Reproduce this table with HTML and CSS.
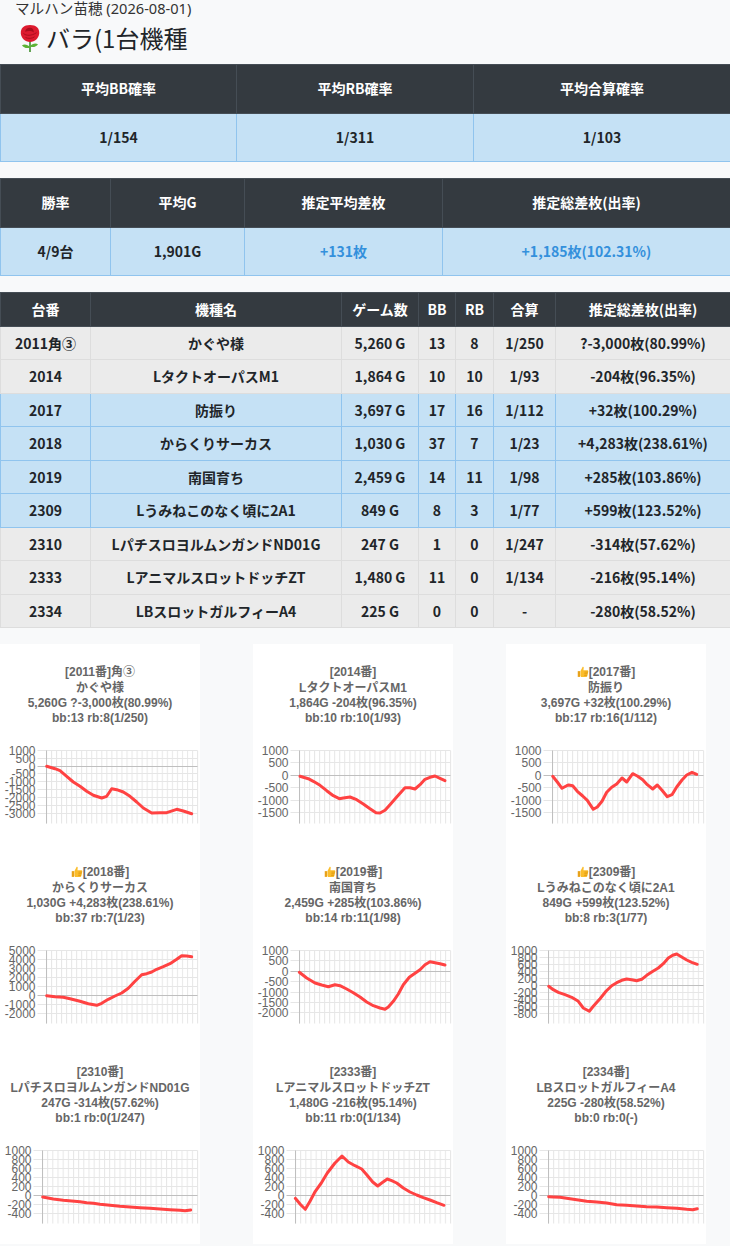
FILE: index.html
```html
<!DOCTYPE html>
<html lang="ja">
<head>
<meta charset="utf-8">
<title>バラ(1台機種</title>
<link rel="stylesheet" href="styles.css">
</head>
<body>
<p class="shop">マルハン苗穂 (2026-08-01)</p>
<h1 class="title"><svg class="rose" viewBox="0 0 24 28"><path class="stem" d="M11.2 16h1.6v12h-1.6z"/><path class="leaf" d="M12 23.5c-2-3-5.5-3.5-8-2.3 1.6 2.6 5 3.6 8 2.3zM12 22.5c2-3 5.5-3.5 8-2.3-1.6 2.6-5 3.6-8 2.3z"/><path class="bloom" d="M12 1C6 1 2.3 4.3 2.8 9.5 3.3 14 7 18 12 18s8.7-4 9.2-8.5C21.7 4.3 18 1 12 1z"/><path class="bloom-d" d="M12 3.8c-3 0-4.8 1.7-4.8 4 2.4-1.2 6-1.2 8.6.6C15.8 5.6 14.5 3.8 12 3.8z"/><path class="bloom-l" d="M5.5 9.5c2.5 2.4 8 2.6 13-.8M7.5 13.5c2.5 1.3 6.5 1.2 9-.6"/></svg><span>バラ(1台機種</span></h1>

<table class="tbl big">
<colgroup><col class="c236"><col class="c237"><col class="c257"></colgroup>
<thead><tr><th>平均BB確率</th><th>平均RB確率</th><th>平均合算確率</th></tr></thead>
<tbody><tr class="blue"><td>1/154</td><td>1/311</td><td>1/103</td></tr></tbody>
</table>

<table class="tbl big">
<colgroup><col class="c110"><col class="c134"><col class="c198"><col class="c288"></colgroup>
<thead><tr><th>勝率</th><th>平均G</th><th>推定平均差枚</th><th>推定総差枚(出率)</th></tr></thead>
<tbody><tr class="blue"><td>4/9台</td><td>1,901G</td><td class="plus">+131枚</td><td class="plus">+1,185枚(102.31%)</td></tr></tbody>
</table>

<table class="tbl list">
<colgroup><col class="c90"><col class="c251"><col class="c77"><col class="c37"><col class="c38"><col class="c62"><col class="c175"></colgroup>
<thead><tr><th>台番</th><th>機種名</th><th>ゲーム数</th><th>BB</th><th>RB</th><th>合算</th><th>推定総差枚(出率)</th></tr></thead>
<tbody>
<tr class="gray"><td>2011角③</td><td>かぐや様</td><td>5,260 G</td><td>13</td><td>8</td><td>1/250</td><td>?-3,000枚(80.99%)</td></tr>
<tr class="gray"><td>2014</td><td>LタクトオーパスM1</td><td>1,864 G</td><td>10</td><td>10</td><td>1/93</td><td>-204枚(96.35%)</td></tr>
<tr class="blue"><td>2017</td><td>防振り</td><td>3,697 G</td><td>17</td><td>16</td><td>1/112</td><td>+32枚(100.29%)</td></tr>
<tr class="blue"><td>2018</td><td>からくりサーカス</td><td>1,030 G</td><td>37</td><td>7</td><td>1/23</td><td>+4,283枚(238.61%)</td></tr>
<tr class="blue"><td>2019</td><td>南国育ち</td><td>2,459 G</td><td>14</td><td>11</td><td>1/98</td><td>+285枚(103.86%)</td></tr>
<tr class="blue"><td>2309</td><td>Lうみねこのなく頃に2A1</td><td>849 G</td><td>8</td><td>3</td><td>1/77</td><td>+599枚(123.52%)</td></tr>
<tr class="gray"><td>2310</td><td>LパチスロヨルムンガンドND01G</td><td>247 G</td><td>1</td><td>0</td><td>1/247</td><td>-314枚(57.62%)</td></tr>
<tr class="gray"><td>2333</td><td>LアニマルスロットドッチZT</td><td>1,480 G</td><td>11</td><td>0</td><td>1/134</td><td>-216枚(95.14%)</td></tr>
<tr class="gray"><td>2334</td><td>LBスロットガルフィーA4</td><td>225 G</td><td>0</td><td>0</td><td>-</td><td>-280枚(58.52%)</td></tr>
</tbody>
</table>

<div class="charts">

<div class="card">
<p class="ctitle">[2011番]角③<br>かぐや様<br>5,260G ?-3,000枚(80.99%)<br>bb:13 rb:8(1/250)</p>
<svg class="chart" viewBox="0 0 200 100">
<defs><pattern id="p1" patternUnits="userSpaceOnUse" x="46" y="0" width="5.033" height="100"><rect class="gv" width="1" height="100"/></pattern></defs>
<rect x="46" y="6.5" width="153" height="73" fill="url(#p1)"/>
<path class="gh" d="M37.5 6.5H197.5M37.5 14.5H197.5M37.5 29.5H197.5M37.5 37.5H197.5M37.5 45.5H197.5M37.5 53.5H197.5M37.5 61.5H197.5M37.5 69.5H197.5"/>
<path class="gz" d="M37.5 22.5H197.5M46.5 6.5V79.5"/>
<text class="yl" x="35.5" y="10.8">1000</text><text class="yl" x="35.5" y="18.8">500</text><text class="yl" x="35.5" y="26.8">0</text><text class="yl" x="35.5" y="33.8">-500</text><text class="yl" x="35.5" y="41.8">-1000</text><text class="yl" x="35.5" y="49.8">-1500</text><text class="yl" x="35.5" y="57.8">-2000</text><text class="yl" x="35.5" y="65.8">-2500</text><text class="yl" x="35.5" y="73.8">-3000</text>
<polyline class="ln" points="46.7,22.3 55,24.7 60,26.7 66.7,32.3 73.3,38 80,42.3 86.7,47.3 93.3,51.3 101.7,54 106.7,52.3 111.7,44.7 116.7,45.7 123.3,48 130,52.3 136.7,58 143.3,64 151.7,69 160,68.7 166.7,68.7 176.7,65.3 183.3,67 191.7,69.7"/>
</svg>
</div>

<div class="card">
<p class="ctitle">[2014番]<br>LタクトオーパスM1<br>1,864G -204枚(96.35%)<br>bb:10 rb:10(1/93)</p>
<svg class="chart" viewBox="0 0 200 100">
<defs><pattern id="p2" patternUnits="userSpaceOnUse" x="46" y="0" width="5.033" height="100"><rect class="gv" width="1" height="100"/></pattern></defs>
<rect x="46" y="6.5" width="153" height="73" fill="url(#p2)"/>
<path class="gh" d="M37.5 6.5H197.5M37.5 18.5H197.5M37.5 43.5H197.5M37.5 56.5H197.5M37.5 68.5H197.5"/>
<path class="gz" d="M37.5 31.5H197.5M46.5 6.5V79.5"/>
<text class="yl" x="35.5" y="10.8">1000</text><text class="yl" x="35.5" y="22.8">500</text><text class="yl" x="35.5" y="35.8">0</text><text class="yl" x="35.5" y="47.8">-500</text><text class="yl" x="35.5" y="60.8">-1000</text><text class="yl" x="35.5" y="72.8">-1500</text>
<polyline class="ln" points="47,32.3 55.3,34.7 60.3,37.3 67,41.3 73.7,46.7 80.3,51.7 86.3,54.7 90.3,54 97,53 103.7,55.7 110.3,60 117,64.7 123,68.7 127,69 132,66.3 137,60.7 143.7,53 152,43.7 157,43.7 162,45 167,40.7 172,35.3 177,33.3 182,32 187,34.3 192,36.7"/>
</svg>
</div>

<div class="card">
<p class="ctitle"><svg class="thumb" viewBox="0 0 16 16"><path class="th-c" d="M1 7.5h3v7.7H1z"/><path class="th-h" d="M4.5 7.5L7.2 2.3C7.6 1.4 9 1.6 9 2.7L8.6 6.3H13.6C14.6 6.3 15.3 7.2 15 8.2L13.7 14.2C13.5 14.8 13 15.2 12.4 15.2H5.6C5 15.2 4.5 14.7 4.5 14.1Z"/><path class="th-l" d="M10 8.8h4.6M9.8 11h4.2M9.6 13.2h3.8"/></svg>[2017番]<br>防振り<br>3,697G +32枚(100.29%)<br>bb:17 rb:16(1/112)</p>
<svg class="chart" viewBox="0 0 200 100">
<defs><pattern id="p3" patternUnits="userSpaceOnUse" x="46" y="0" width="5.033" height="100"><rect class="gv" width="1" height="100"/></pattern></defs>
<rect x="46" y="6.5" width="153" height="73" fill="url(#p3)"/>
<path class="gh" d="M37.5 6.5H197.5M37.5 18.5H197.5M37.5 43.5H197.5M37.5 56.5H197.5M37.5 68.5H197.5"/>
<path class="gz" d="M37.5 31.5H197.5M46.5 6.5V79.5"/>
<text class="yl" x="35.5" y="10.8">1000</text><text class="yl" x="35.5" y="22.8">500</text><text class="yl" x="35.5" y="35.8">0</text><text class="yl" x="35.5" y="47.8">-500</text><text class="yl" x="35.5" y="60.8">-1000</text><text class="yl" x="35.5" y="72.8">-1500</text>
<polyline class="ln" points="46.7,32.3 51.3,38 56,44.3 60.7,41.7 62.7,41 66.7,41.7 71.3,47.3 76.7,52 81.3,56.3 87.3,65.3 91.3,63 96,57.3 100.7,48.3 105.7,43.3 110.7,40 116,34 120.7,38 126.7,29.7 131.3,32 136.7,35.7 141.3,40.7 146.7,45 151.3,41 156,46.3 161.3,52.7 166,50.7 170.7,43 176,36 180.7,31 186,28.3 190.7,30.3"/>
</svg>
</div>

<div class="card">
<p class="ctitle"><svg class="thumb" viewBox="0 0 16 16"><path class="th-c" d="M1 7.5h3v7.7H1z"/><path class="th-h" d="M4.5 7.5L7.2 2.3C7.6 1.4 9 1.6 9 2.7L8.6 6.3H13.6C14.6 6.3 15.3 7.2 15 8.2L13.7 14.2C13.5 14.8 13 15.2 12.4 15.2H5.6C5 15.2 4.5 14.7 4.5 14.1Z"/><path class="th-l" d="M10 8.8h4.6M9.8 11h4.2M9.6 13.2h3.8"/></svg>[2018番]<br>からくりサーカス<br>1,030G +4,283枚(238.61%)<br>bb:37 rb:7(1/23)</p>
<svg class="chart" viewBox="0 0 200 100">
<defs><pattern id="p4" patternUnits="userSpaceOnUse" x="46" y="0" width="5.033" height="100"><rect class="gv" width="1" height="100"/></pattern></defs>
<rect x="46" y="6.5" width="153" height="73" fill="url(#p4)"/>
<path class="gh" d="M37.5 6.5H197.5M37.5 15.5H197.5M37.5 24.5H197.5M37.5 33.5H197.5M37.5 42.5H197.5M37.5 60.5H197.5M37.5 69.5H197.5"/>
<path class="gz" d="M37.5 51.5H197.5M46.5 6.5V79.5"/>
<text class="yl" x="35.5" y="10.8">5000</text><text class="yl" x="35.5" y="19.8">4000</text><text class="yl" x="35.5" y="28.8">3000</text><text class="yl" x="35.5" y="37.8">2000</text><text class="yl" x="35.5" y="46.8">1000</text><text class="yl" x="35.5" y="55.8">0</text><text class="yl" x="35.5" y="64.8">-1000</text><text class="yl" x="35.5" y="73.8">-2000</text>
<polyline class="ln" points="46.7,51.7 55,52.7 63.3,53.3 70,54.7 80,57.3 88.3,59.7 96.7,61.3 101.7,59.3 108.3,55.3 115,52 121.7,49 128.3,44.3 135,37.3 141.7,30.7 146.7,29.7 151.7,28 156.7,25.3 163.3,22.7 170,19.7 176.7,15.3 181.7,11.7 186.7,12 191.7,12.7"/>
</svg>
</div>

<div class="card">
<p class="ctitle"><svg class="thumb" viewBox="0 0 16 16"><path class="th-c" d="M1 7.5h3v7.7H1z"/><path class="th-h" d="M4.5 7.5L7.2 2.3C7.6 1.4 9 1.6 9 2.7L8.6 6.3H13.6C14.6 6.3 15.3 7.2 15 8.2L13.7 14.2C13.5 14.8 13 15.2 12.4 15.2H5.6C5 15.2 4.5 14.7 4.5 14.1Z"/><path class="th-l" d="M10 8.8h4.6M9.8 11h4.2M9.6 13.2h3.8"/></svg>[2019番]<br>南国育ち<br>2,459G +285枚(103.86%)<br>bb:14 rb:11(1/98)</p>
<svg class="chart" viewBox="0 0 200 100">
<defs><pattern id="p5" patternUnits="userSpaceOnUse" x="46" y="0" width="5.033" height="100"><rect class="gv" width="1" height="100"/></pattern></defs>
<rect x="46" y="6.5" width="153" height="73" fill="url(#p5)"/>
<path class="gh" d="M37.5 6.5H197.5M37.5 16.5H197.5M37.5 37.5H197.5M37.5 48.5H197.5M37.5 58.5H197.5M37.5 68.5H197.5"/>
<path class="gz" d="M37.5 27.5H197.5M46.5 6.5V79.5"/>
<text class="yl" x="35.5" y="10.8">1000</text><text class="yl" x="35.5" y="20.8">500</text><text class="yl" x="35.5" y="31.8">0</text><text class="yl" x="35.5" y="41.8">-500</text><text class="yl" x="35.5" y="52.8">-1000</text><text class="yl" x="35.5" y="62.8">-1500</text><text class="yl" x="35.5" y="72.8">-2000</text>
<polyline class="ln" points="46.3,28.3 53.7,34 62,39 68.7,41 75.3,42.7 82,40.7 87,41.7 93.7,45 100.3,48.7 107,53 113.7,58 120.3,61.7 127,64 132,65.3 135.3,63 140.3,57.3 145.3,50 150.3,40.7 156.3,33.3 162,29.3 167,25.7 172,20.7 177,17.7 182,18.7 187,19.7 192,21"/>
</svg>
</div>

<div class="card">
<p class="ctitle"><svg class="thumb" viewBox="0 0 16 16"><path class="th-c" d="M1 7.5h3v7.7H1z"/><path class="th-h" d="M4.5 7.5L7.2 2.3C7.6 1.4 9 1.6 9 2.7L8.6 6.3H13.6C14.6 6.3 15.3 7.2 15 8.2L13.7 14.2C13.5 14.8 13 15.2 12.4 15.2H5.6C5 15.2 4.5 14.7 4.5 14.1Z"/><path class="th-l" d="M10 8.8h4.6M9.8 11h4.2M9.6 13.2h3.8"/></svg>[2309番]<br>Lうみねこのなく頃に2A1<br>849G +599枚(123.52%)<br>bb:8 rb:3(1/77)</p>
<svg class="chart" viewBox="0 0 200 100">
<defs><pattern id="p6" patternUnits="userSpaceOnUse" x="42" y="0" width="5.167" height="100"><rect class="gv" width="1" height="100"/></pattern></defs>
<rect x="42" y="6.5" width="157" height="73" fill="url(#p6)"/>
<path class="gh" d="M33.5 6.5H197.5M33.5 13.5H197.5M33.5 20.5H197.5M33.5 27.5H197.5M33.5 34.5H197.5M33.5 48.5H197.5M33.5 55.5H197.5M33.5 62.5H197.5M33.5 69.5H197.5"/>
<path class="gz" d="M33.5 41.5H197.5M42.5 6.5V79.5"/>
<text class="yl" x="31.5" y="10.8">1000</text><text class="yl" x="31.5" y="17.8">800</text><text class="yl" x="31.5" y="24.8">600</text><text class="yl" x="31.5" y="31.8">400</text><text class="yl" x="31.5" y="38.8">200</text><text class="yl" x="31.5" y="45.8">0</text><text class="yl" x="31.5" y="52.8">-200</text><text class="yl" x="31.5" y="59.8">-400</text><text class="yl" x="31.5" y="66.8">-600</text><text class="yl" x="31.5" y="73.8">-800</text>
<polyline class="ln" points="42.7,42.3 47.3,45.7 52.3,48.3 59,50.7 65.7,53.3 72.3,57.3 77.3,64 83.3,67.3 87.3,62.3 94,54.7 100,47.3 105.7,41.7 110.7,38.7 115.7,36.3 120.7,35 125.7,35.7 130.7,36.7 135.7,35.3 140.7,31.3 145.7,28 152.3,24 157.3,19.7 162.3,14 166.7,11.3 170.7,10 175.7,13 180.7,16 185.7,18.3 191.3,20.3"/>
</svg>
</div>

<div class="card">
<p class="ctitle">[2310番]<br>LパチスロヨルムンガンドND01G<br>247G -314枚(57.62%)<br>bb:1 rb:0(1/247)</p>
<svg class="chart" viewBox="0 0 200 100">
<defs><pattern id="p7" patternUnits="userSpaceOnUse" x="42" y="0" width="5.167" height="100"><rect class="gv" width="1" height="100"/></pattern></defs>
<rect x="42" y="6.5" width="157" height="73" fill="url(#p7)"/>
<path class="gh" d="M33.5 6.5H197.5M33.5 15.5H197.5M33.5 24.5H197.5M33.5 33.5H197.5M33.5 42.5H197.5M33.5 60.5H197.5M33.5 69.5H197.5"/>
<path class="gz" d="M33.5 51.5H197.5M42.5 6.5V79.5"/>
<text class="yl" x="31.5" y="10.8">1000</text><text class="yl" x="31.5" y="19.8">800</text><text class="yl" x="31.5" y="28.8">600</text><text class="yl" x="31.5" y="37.8">400</text><text class="yl" x="31.5" y="46.8">200</text><text class="yl" x="31.5" y="55.8">0</text><text class="yl" x="31.5" y="64.8">-200</text><text class="yl" x="31.5" y="73.8">-400</text>
<polyline class="ln" points="42.7,53 53.3,55 63.3,56.3 71.7,57 80,57.7 86.7,58.7 93.3,59.3 100,60.3 110,61.3 120,62.3 130,63 140,63.7 150,64.3 160,65 170,65.7 180,66.3 185,66.7 190.7,66"/>
</svg>
</div>

<div class="card">
<p class="ctitle">[2333番]<br>LアニマルスロットドッチZT<br>1,480G -216枚(95.14%)<br>bb:11 rb:0(1/134)</p>
<svg class="chart" viewBox="0 0 200 100">
<defs><pattern id="p8" patternUnits="userSpaceOnUse" x="42" y="0" width="5.167" height="100"><rect class="gv" width="1" height="100"/></pattern></defs>
<rect x="42" y="6.5" width="157" height="73" fill="url(#p8)"/>
<path class="gh" d="M33.5 6.5H197.5M33.5 15.5H197.5M33.5 24.5H197.5M33.5 33.5H197.5M33.5 42.5H197.5M33.5 60.5H197.5M33.5 69.5H197.5"/>
<path class="gz" d="M33.5 51.5H197.5M42.5 6.5V79.5"/>
<text class="yl" x="31.5" y="10.8">1000</text><text class="yl" x="31.5" y="19.8">800</text><text class="yl" x="31.5" y="28.8">600</text><text class="yl" x="31.5" y="37.8">400</text><text class="yl" x="31.5" y="46.8">200</text><text class="yl" x="31.5" y="55.8">0</text><text class="yl" x="31.5" y="64.8">-200</text><text class="yl" x="31.5" y="73.8">-400</text>
<polyline class="ln" points="42.3,54.3 47.7,60.7 52.3,65.3 57,57.3 62.3,47.3 68.3,39 74.3,29 82,19 89,12 95.3,18 102,21.7 108.7,25 113.7,30.7 119.7,38 124.7,42 128.7,39 134.3,35 138.7,36.7 143.7,39 150.3,44 157,48 163.7,51 170.3,53.7 177,56 183.7,58.7 191,61.3"/>
</svg>
</div>

<div class="card">
<p class="ctitle">[2334番]<br>LBスロットガルフィーA4<br>225G -280枚(58.52%)<br>bb:0 rb:0(-)</p>
<svg class="chart" viewBox="0 0 200 100">
<defs><pattern id="p9" patternUnits="userSpaceOnUse" x="42" y="0" width="5.167" height="100"><rect class="gv" width="1" height="100"/></pattern></defs>
<rect x="42" y="6.5" width="157" height="73" fill="url(#p9)"/>
<path class="gh" d="M33.5 6.5H197.5M33.5 15.5H197.5M33.5 24.5H197.5M33.5 33.5H197.5M33.5 42.5H197.5M33.5 60.5H197.5M33.5 69.5H197.5"/>
<path class="gz" d="M33.5 51.5H197.5M42.5 6.5V79.5"/>
<text class="yl" x="31.5" y="10.8">1000</text><text class="yl" x="31.5" y="19.8">800</text><text class="yl" x="31.5" y="28.8">600</text><text class="yl" x="31.5" y="37.8">400</text><text class="yl" x="31.5" y="46.8">200</text><text class="yl" x="31.5" y="55.8">0</text><text class="yl" x="31.5" y="64.8">-200</text><text class="yl" x="31.5" y="73.8">-400</text>
<polyline class="ln" points="42.7,52.7 47.3,53 54,53.3 60.7,54.3 70.7,55.7 80.7,57.3 90.7,58 100.7,59 110.7,60.7 120.7,61.3 130.7,62 140.7,62.7 150.7,63 160.7,63.7 170.7,64.3 180.7,65.3 186.7,65.7 191.3,64.7"/>
</svg>
</div>

</div>
</body>
</html>
```

FILE: styles.css
```css
* {
  box-sizing: border-box;
}

body {
  margin: 0;
  background: #f8f9fa;
  color: #212529;
  font-family: "Noto Sans", "Noto Sans CJK JP", sans-serif;
}

.shop {
  margin: 0;
  padding-left: 15px;
  font-size: 14.6px;
  line-height: 17px;
  color: #333;
}

.title {
  display: flex;
  align-items: center;
  margin: 4px 0 9px;
  padding-left: 18px;
  font-family: "Noto Sans CJK JP", sans-serif;
  font-size: 24px;
  line-height: 34px;
  font-weight: normal;
  color: #212529;
}

.rose {
  width: 24px;
  height: 28px;
  margin-right: 4px;
  flex: none;
}

.stem { fill: #3f8f2c; }
.leaf { fill: #5cb335; }
.bloom { fill: #dd1a2e; }
.bloom-d { fill: #a80c1c; }
.bloom-l { fill: none; stroke: #9e0a1a; stroke-width: 0.8; }

.tbl {
  width: 730px;
  border-collapse: collapse;
  table-layout: fixed;
  margin-bottom: 16px;
  font-family: "Noto Sans CJK JP", sans-serif;
  font-weight: bold;
  font-size: 14px;
  line-height: 21px;
  text-align: center;
}

.c236 { width: 236px; }
.c237 { width: 237px; }
.c257 { width: 257px; }
.c110 { width: 110px; }
.c134 { width: 134px; }
.c198 { width: 198px; }
.c288 { width: 288px; }
.c90 { width: 90px; }
.c251 { width: 251px; }
.c77 { width: 77px; }
.c37 { width: 37px; }
.c38 { width: 38px; }
.c62 { width: 62px; }
.c175 { width: 175px; }

.tbl th {
  background: #343a40;
  color: #fff;
  border: 1px solid #454d55;
  white-space: nowrap;
}

.tbl td {
  border: 1px solid #dcdcdc;
  white-space: nowrap;
}

.big th,
.big td {
  padding: 13.3px 4px;
}

.list th,
.list td {
  padding: 5.75px 3px;
}

.blue td {
  background: #c5e1f5;
  border-color: #90c4ee;
}

.gray td {
  background: #ebebeb;
  border-color: #dddddd;
}

.plus {
  color: #3490dc;
}

.charts {
  display: grid;
  grid-template-columns: repeat(3, 200px);
  column-gap: 53px;
}

.card {
  background: #fff;
  height: 200px;
  padding-top: 21px;
}

.ctitle {
  height: 79px;
  margin: 0;
  font-family: "Liberation Sans", "Noto Sans CJK JP", sans-serif;
  font-weight: bold;
  font-size: 12px;
  line-height: 15.3px;
  color: #666;
  text-align: center;
  white-space: nowrap;
}

.thumb {
  width: 12px;
  height: 13px;
  vertical-align: -2px;
}

.th-c { fill: #e8a21a; }
.th-h { fill: #fbbd2b; }
.th-l { fill: none; stroke: #d48a00; stroke-width: 0.8; }

.chart {
  display: block;
  width: 200px;
  height: 100px;
}

.gv { fill: #e6e6e6; }
.gh { stroke: #e6e6e6; stroke-width: 1; fill: none; }
.gz { stroke: #bfbfbf; stroke-width: 1; fill: none; }

.yl {
  font-family: "Liberation Sans", sans-serif;
  font-size: 12px;
  fill: #666;
  text-anchor: end;
}

.ln {
  fill: none;
  stroke: #ff4242;
  stroke-width: 3;
  stroke-linejoin: round;
  stroke-linecap: round;
}
```
